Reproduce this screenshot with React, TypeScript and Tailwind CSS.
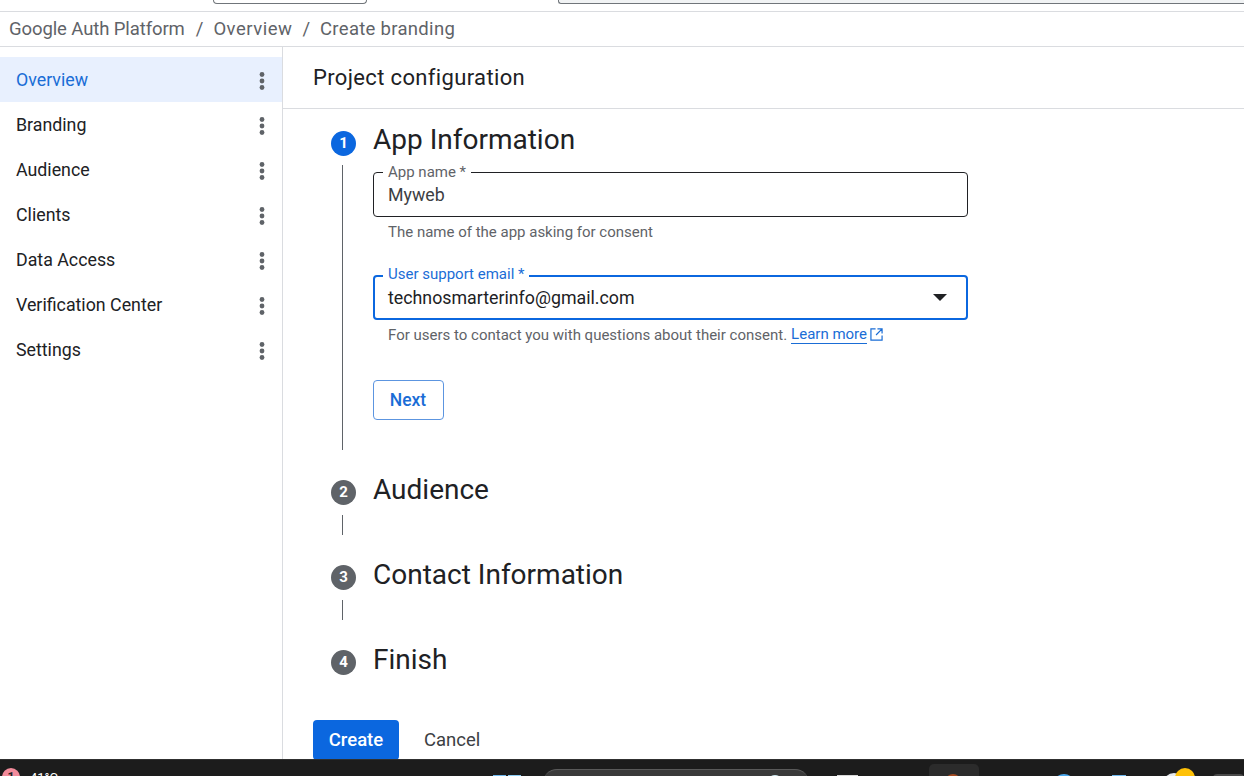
const navItems = ['Overview', 'Branding', 'Audience', 'Clients', 'Data Access', 'Verification Center', 'Settings'];

const MoreDots = () => (
  <svg width="24" height="24" viewBox="0 0 24 24" fill="#5f6368">
    <circle cx="12" cy="6.5" r="2.4" />
    <circle cx="12" cy="13" r="2.4" />
    <circle cx="12" cy="19.5" r="2.4" />
  </svg>
);

const StepCircle = ({ n, active }: { n: number; active?: boolean }) => (
  <div
    className={`flex h-[25px] w-[25px] shrink-0 items-center justify-center rounded-full text-[15px] font-bold text-white ${
      active ? 'bg-[#0b67df]' : 'bg-[#5f6368]'
    }`}
  >
    {n}
  </div>
);

const StepTitle = ({ children, collapsed }: { children: string; collapsed?: boolean }) => (
  <h2 className={`ml-[17px] text-[28px] leading-[25px] text-[#202124] ${collapsed ? '-mt-[3px]' : '-mt-[4px]'}`}>{children}</h2>
);

const CollapsedStep = ({ n, title, line }: { n: number; title: string; line?: boolean }) => (
  <div className="flex flex-col">
    <div className="flex items-start">
      <StepCircle n={n} />
      <StepTitle collapsed>{title}</StepTitle>
    </div>
    {line && <div className="ml-[11px] mt-[10px] mb-[30px] h-[20px] w-px bg-[#5f6368]" />}
  </div>
);

export default function App() {
  return (
    <div className="flex h-[776px] w-[1244px] flex-col overflow-hidden bg-white font-['Roboto',sans-serif]">
      {/* top strip, browser page cut off */}
      <div className="flex h-3 shrink-0 items-start border-b border-[#dadce0]">
        <div className="ml-[213px] h-[4px] w-[154px] rounded-b-[4px] border border-t-0 border-[#70757a]" />
        <div className="ml-[191px] h-[4px] flex-1 rounded-bl-[3px] border-b border-l border-[#70757a] bg-[#f1f3f4]" />
      </div>

      {/* breadcrumb */}
      <div className="flex h-[34px] shrink-0 items-center pt-[2px] text-[18.5px] text-[#5f6368]">
        <span className="ml-[9px] tracking-[-0.1px]">Google Auth Platform</span>
        <span className="ml-[11px]">/</span>
        <span className="ml-[10px] tracking-[0.5px]">Overview</span>
        <span className="ml-[10px]">/</span>
        <span className="ml-[10px] tracking-[0.3px]">Create branding</span>
      </div>

      <div className="flex min-h-0 flex-1 border-t border-[#dadce0]">
        {/* sidebar */}
        <nav className="w-[283px] shrink-0 border-r border-[#dadce0] pt-[10px]">
          {navItems.map((item, i) => (
            <div
              key={item}
              className={`flex h-[45px] items-center justify-between pl-4 pr-2 text-[17.8px] ${
                i === 0 ? 'bg-[#e8f0fe] text-[#1a6dd6]' : 'text-[#202124]'
              }`}
            >
              <span className="pt-[2px]">{item}</span>
              <MoreDots />
            </div>
          ))}
        </nav>

        {/* main */}
        <main className="flex min-w-0 flex-1 flex-col">
          <div className="flex h-[62px] shrink-0 items-center border-b border-[#dadce0] pl-[30px] text-[22px] tracking-[0.35px] text-[#202124]">
            Project configuration
          </div>

          <div className="pl-[48px] pt-[22px]">
            <div className="flex items-start">
              <StepCircle n={1} active />
              <StepTitle>App Information</StepTitle>
            </div>

            <div className="flex">
              <div className="ml-[11px] mt-[9px] h-[285px] w-px shrink-0 bg-[#5f6368]" />
              <div className="ml-[30px] w-[595px] pt-[16px]">
                <div className="relative flex h-[45px] items-center rounded-[4px] border border-[#202124] pl-[14px] text-[17.8px] text-[#3c4043]">
                  <span className="absolute -top-[10px] left-[9px] bg-white px-[5px] text-[15px] leading-[18px] text-[#5f6368]">App name *</span>
                  <span className="pt-[2px]">Myweb</span>
                </div>
                <p className="ml-[15px] mt-[6px] text-[15px] leading-[18px] text-[#5f6368]">The name of the app asking for consent</p>

                <div className="relative mt-[34px] flex h-[45px] items-center justify-between rounded-[4px] border-2 border-[#0b67df] pl-[13px] pr-[19px] text-[17.8px] text-[#202124]">
                  <span className="absolute -top-[12px] left-[8px] bg-white px-[5px] text-[15px] leading-[18px] text-[#1a6dd6]">User support email *</span>
                  <span className="pt-[2px]">technosmarterinfo@gmail.com</span>
                  <svg width="14" height="7" viewBox="0 0 14 7" fill="#202124"><path d="M0 0h14L7 7z" /></svg>
                </div>
                <p className="ml-[15px] mt-[5px] flex items-center text-[15px] leading-[18px] text-[#5f6368]">
                  For users to contact you with questions about their consent.
                  <span className="ml-1 border-b border-[#1a6dd6] text-[#1a6dd6]">Learn more</span>
                  <svg className="ml-[3px]" width="13" height="13" viewBox="0 0 14 14" fill="none" stroke="#1a6dd6" strokeWidth="1.3">
                    <path d="M6 1H1v12h12V8M8 1h5v5M13 1 6.5 7.5" />
                  </svg>
                </p>

                <button className="mt-[36px] flex h-10 w-[71px] items-center justify-center rounded-[4px] border border-[#5c95e0] pr-[1px] text-[17.5px] font-medium text-[#1a6dd6]">
                  Next
                </button>
              </div>
            </div>

            <div className="mt-[30px]">
              <CollapsedStep n={2} title="Audience" line />
              <CollapsedStep n={3} title="Contact Information" line />
              <CollapsedStep n={4} title="Finish" />
            </div>
          </div>

          <div className="ml-[30px] mt-[45px] flex items-center">
            <button className="h-10 w-[86px] rounded-[4px] bg-[#0b67df] pt-[1px] text-[18.5px] font-medium text-white">Create</button>
            <button className="ml-[25px] pt-[1px] text-[18.5px] text-[#3c4043]">Cancel</button>
          </div>
        </main>
      </div>

      {/* windows taskbar, cut off */}
      <div className="flex h-[17px] shrink-0 items-start overflow-hidden border-t border-[#303030] bg-[#1c1c1c]">
        <div className="ml-[2px] mt-[8px] flex h-[18px] w-[18px] shrink-0 items-center justify-center rounded-full bg-[#f28b9b] text-[12px] font-bold text-[#202124]">1</div>
        <span className="ml-[10px] mt-[11px] w-[27px] shrink-0 text-[13px] leading-[14px] text-white">41°C</span>
        <div className="ml-[436px] mt-[15px] flex h-3 w-[28px] shrink-0 gap-[2px]">
          <div className="h-3 w-[13px] bg-[#6fb8ee]" />
          <div className="h-3 w-[13px] bg-[#8ccdf5]" />
        </div>
        <div className="relative ml-[22px] mt-[9px] h-6 w-[266px] shrink-0 rounded-t-[14px] border-t border-[#5a5a5a] bg-[#3a3a3a]">
          <div className="absolute right-[26px] top-[5px] h-4 w-4 rounded-full bg-[#cfe8ef]" />
        </div>
        <div className="ml-[28px] mt-[15px] h-3 w-[21px] shrink-0 bg-[#d8d8d8]" />
        <div className="relative ml-[71px] mt-[4px] h-8 w-[50px] shrink-0 rounded-[5px] bg-[#2b2b2b]">
          <div className="absolute left-[16px] top-[10px] h-4 w-4 rounded-full bg-[#a4491f]" />
        </div>
        <div className="ml-[74px] mt-[14px] h-[22px] w-[22px] shrink-0 rounded-full bg-[#4aa8ee]" />
        <div className="ml-[37px] mt-[15px] h-4 w-[14px] shrink-0 bg-[#6fb8ee]" />
        <div className="ml-[37px] mt-[13px] h-[22px] w-[22px] shrink-0 rounded-full bg-[#e8eaed]" />
        <div className="-ml-[10px] mt-[8px] h-5 w-5 shrink-0 rounded-full bg-[#ffc107]" />
        <div className="ml-[18px] mt-[14px] h-6 w-[31px] shrink-0 rounded-t-[4px] bg-[#4a4a4a]" />
      </div>
    </div>
  );
}
